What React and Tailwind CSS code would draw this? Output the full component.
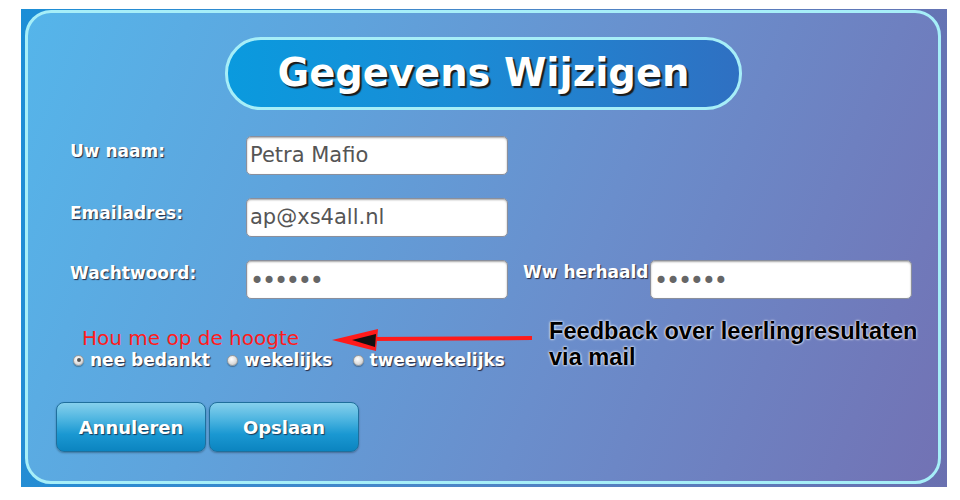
import React from "react";

const verdana = { fontFamily: '"DejaVu Sans", Verdana, sans-serif' };
const arial = { fontFamily: '"Liberation Sans", Arial, sans-serif' };

function Label({ children, className = "" }) {
  return (
    <div
      className={"text-[17px] font-bold leading-[20px] text-white [text-shadow:1px_1px_1px_#2a2a40] " + className}
      style={verdana}
    >
      {children}
    </div>
  );
}

function Input({ value, password, className = "" }) {
  return (
    <div
      className={
        "h-[39px] w-[262px] rounded-[5px] border border-[#8a8f9c] bg-white shadow-[inset_0_1px_2px_rgba(0,0,0,0.35)] flex items-center pl-[3px] text-[#555] " +
        className
      }
      style={verdana}
    >
      {password ? (
        <span className="text-[24px] leading-none tracking-[-2.2px] text-[#666] pt-[2px]">••••••</span>
      ) : (
        <span className="text-[21px] leading-none">{value}</span>
      )}
    </div>
  );
}

function Radio({ checked }) {
  return (
    <span className="relative inline-block h-[11px] w-[11px] rounded-full border border-[#9a9a9a] bg-[radial-gradient(circle_at_40%_35%,#ffffff_0%,#dcdcdc_60%,#b8b8b8_100%)] shadow-[0_1px_1px_rgba(0,0,0,0.3)]">
      {checked && (
        <span className="absolute left-[2.5px] top-[2.5px] h-[4px] w-[4px] rounded-full bg-[#555]" />
      )}
    </span>
  );
}

function Button({ children, className = "" }) {
  return (
    <div
      className={
        "flex h-[50px] w-[150px] items-center justify-center rounded-[8px] border border-[#1f6f9c] bg-[linear-gradient(180deg,#86d0ec_0%,#4cb4e0_35%,#1a98d2_65%,#0b84c0_100%)] text-[18px] font-bold text-white [text-shadow:1px_1px_1px_#1a3a5a] shadow-[0_1px_2px_rgba(0,0,0,0.3)] " +
        className
      }
      style={verdana}
    >
      {children}
    </div>
  );
}

export default function App() {
  return (
    <div className="h-[500px] w-[960px] bg-white pl-[21px] pt-[9px]">
      <div className="relative h-[478px] w-[926px] bg-[linear-gradient(100deg,#1c8ed6_0%,#4a86c8_50%,#6a70b0_100%)] pl-[4px] pt-[1px] pr-[6px] pb-[3px]">
        <div className="relative h-full w-full rounded-[26px] border-[3px] border-[#a6eef8] bg-[linear-gradient(112deg,#55b5ea_0%,#5fa3dc_30%,#6a8ecc_60%,#7272b4_100%)]">
          {/* Title */}
          <div className="ml-[197px] mt-[24px] flex h-[73px] w-[517px] items-center justify-center rounded-[36px] border-[3px] border-[#a6eef8] bg-[linear-gradient(90deg,#0a9ade_0%,#1a8cd6_45%,#2f70c2_100%)]">
            <span
              className="text-[38.5px] font-bold leading-none text-white [text-shadow:2px_2px_1px_#1a1a1a]"
              style={verdana}
            >
              Gegevens Wijzigen
            </span>
          </div>

          {/* Rows */}
          <div className="mt-[26px] ml-[42px] flex flex-col gap-[23px]">
            <div className="flex items-start">
              <Label className="w-[176px] pt-[5px]">Uw naam:</Label>
              <Input value="Petra Mafio" />
            </div>
            <div className="flex items-start">
              <Label className="w-[176px] pt-[5px]">Emailadres:</Label>
              <Input value="ap@xs4all.nl" />
            </div>
            <div className="flex items-start">
              <Label className="w-[176px] pt-[3px]">Wachtwoord:</Label>
              <Input password />
              <Label className="ml-[15px] w-[127px] pt-[2px]">Ww herhaald</Label>
              <Input password className="w-[261px]" />
            </div>
          </div>

          {/* Hou me op de hoogte */}
          <div
            className="mt-[28px] ml-[54px] text-[20px] leading-[22px] text-[#ff1c1c]"
            style={verdana}
          >
            Hou me op de hoogte
          </div>
          <div className="ml-[45px] flex items-center text-[17px] font-bold leading-[22px] text-white [text-shadow:1px_1px_1px_#2a2a40]" style={verdana}>
            <Radio checked />
            <span className="ml-[6px]">nee bedankt</span>
            <span className="ml-[17px]"><Radio /></span>
            <span className="ml-[6px]">wekelijks</span>
            <span className="ml-[20px]"><Radio /></span>
            <span className="ml-[6px]">tweewekelijks</span>
          </div>

          {/* Buttons */}
          <div className="mt-[31px] ml-[28px] flex gap-[3px]">
            <Button>Annuleren</Button>
            <Button>Opslaan</Button>
          </div>

          {/* Annotation arrow */}
          <svg
            className="absolute left-[302px] top-[313px]"
            width="204"
            height="28"
            viewBox="0 0 204 28"
          >
            <line x1="40" y1="13" x2="202" y2="12" stroke="#ff1a1a" strokeWidth="4" />
            <polygon points="2,14 48,3 46,25" fill="#ff1a1a" />
            <polygon points="22,14 46,8 45,21" fill="#111" />
          </svg>

          {/* Annotation text */}
          <div
            className="absolute left-[521px] top-[305px] text-[23.6px] font-bold leading-[26px] text-black [text-shadow:0_0_3px_#fff,0_0_2px_#fff]"
            style={arial}
          >
            Feedback over leerlingresultaten
            <br />
            via mail
          </div>
        </div>
      </div>
    </div>
  );
}
